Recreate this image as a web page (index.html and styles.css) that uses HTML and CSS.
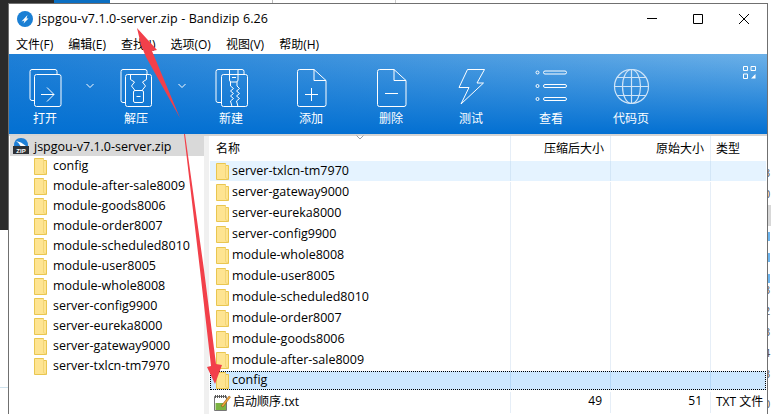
FILE: index.html
```html
<!DOCTYPE html>
<html lang="zh">
<head>
<meta charset="utf-8">
<title>Bandizip</title>
<link rel="stylesheet" href="styles.css">
</head>
<body>
<svg class="defs" width="0" height="0" aria-hidden="true">
  <symbol id="folder" viewBox="0 0 13 17">
    <path d="M.5.5H9.5L9.5 2.500H12.500V16.500H.5Z" fill="#fee491" stroke="#e9c650"/>
    <path d="M9.500 1V14.500L12 16" fill="none" stroke="#f3d677"/>
  </symbol>
</svg>
<div class="desktop" aria-hidden="true">
  <div class="bg-dark"></div>
  <div class="bg-blue"></div>
  <div class="bg-line1"></div>
  <div class="bg-line2"></div>
  <div class="bg-leftline"></div>
  <div class="bg-gray"></div>
  <div class="bg-b1"></div><div class="bg-b2"></div><div class="bg-b3"></div>
  <div class="frag f1">3</div><div class="frag f2">0</div><div class="frag f3">3</div><div class="frag f4">2</div><div class="frag f5">3</div><div class="frag f6">4</div><div class="frag f7">3</div><div class="frag f8">0</div>
</div>
<main class="window">
  <header class="titlebar">
    <svg class="appicon" width="16" height="16" viewBox="0 0 16 16"><circle cx="8" cy="8" r="8" fill="#1a7fd4"/><path d="M4.500 10.500 10.500 4 9.500 7.500 11.500 7.500 6.500 12.500 7.500 9.500Z" fill="#fff"/></svg>
    <span class="title">jspgou-v7.1.0-server.zip - Bandizip 6.26</span>
    <div class="winbtns">
      <svg width="10" height="10" viewBox="0 0 10 10"><path d="M0 4.500H10" stroke="#000" fill="none"/></svg>
      <svg width="10" height="10" viewBox="0 0 10 10"><path d="M.5.5H9.500V9.500H.5Z" stroke="#000" fill="none"/></svg>
      <svg width="10" height="10" viewBox="0 0 10 10"><path d="M0 0 10 10M10 0 0 10" stroke="#000" fill="none"/></svg>
    </div>
  </header>
  <nav class="menubar">
    <span>文件(F)</span><span>编辑(E)</span><span>查找(I)</span><span>选项(O)</span><span>视图(V)</span><span>帮助(H)</span>
  </nav>
  <section class="toolbar">
    <div class="tool w72">
      <svg class="ico" width="40" height="40" viewBox="0 0 40 40"><path d="M9 31.500H7Q5 31.500 5 29.500V2.500Q5 .5 7 .5H30Q32 .5 32 2.500V5"/><rect x="9.500" y="5.500" width="26.500" height="32" rx="2"/><path d="M16 25.500H29M22 18.500 29 25.500 22 32.500"/></svg>
      <span>打开</span>
    </div>
    <div class="chev"><svg width="8" height="6" viewBox="0 0 8 6"><path d="M.5 1 4 4.500 7.500 1"/></svg></div>
    <div class="tool w74">
      <svg class="ico" width="40" height="40" viewBox="0 0 40 40"><path d="M9 33.500H7Q5 33.500 5 31.500V2.500Q5 .5 7 .5H29Q31 .5 31 2.500V5"/><rect x="9.500" y="5.500" width="26" height="32" rx="2"/><path d="M14.500 5.500V10.500L18.500 13 15.500 17 19 21.500M30.500 5.500V10.500L26.500 13 29.500 17 26 21.500"/><rect x="17.500" y="21.500" width="10" height="12" rx="1.500"/><path d="M20.500 27.500H24.500"/></svg>
      <span>解压</span>
    </div>
    <div class="chev"><svg width="8" height="6" viewBox="0 0 8 6"><path d="M.5 1 4 4.500 7.500 1"/></svg></div>
    <div class="tool">
      <svg class="ico" width="40" height="40" viewBox="0 0 40 40"><path d="M10 33.500H7Q5 33.500 5 31.500V2.500Q5 .5 7 .5H31Q33 .5 33 2.500V5"/><rect x="10.500" y="5.500" width="26" height="32" rx="2"/><path d="M18.500 .5V11Q18.500 13 20.500 13H25Q27 13 27 11V.5M21 8.500H25M19.500 13V17L22.500 19.500 19.500 22 22.500 24.500 19.500 27 22.500 29.500 19.500 32 21 37.500M26 13V17L28.500 19.500 25.500 22 28.500 24.500 25.500 27 28.500 29.500 25.500 32 27 37.500"/></svg>
      <span>新建</span>
    </div>
    <div class="tool">
      <svg class="ico" width="40" height="40" viewBox="0 0 40 40"><path d="M6.500 2.500Q6.500 .5 8.500 .5H23L35 11.500V35.500Q35 37.500 33 37.500H8.500Q6.500 37.500 6.500 35.500ZM23 .5V11.500H35"/><path d="M14 25.500H27M20.500 19V32"/></svg>
      <span>添加</span>
    </div>
    <div class="tool">
      <svg class="ico" width="40" height="40" viewBox="0 0 40 40"><path d="M6.500 2.500Q6.500 .5 8.500 .5H23L35 11.500V35.500Q35 37.500 33 37.500H8.500Q6.500 37.500 6.500 35.500ZM23 .5V11.500H35"/><path d="M14 24.500H27"/></svg>
      <span>删除</span>
    </div>
    <div class="tool">
      <svg class="ico" width="40" height="40" viewBox="0 0 40 40"><path d="M16.500 .5H33.500L26 14H32.500L10 35 18 18.500H8Z"/></svg>
      <span>测试</span>
    </div>
    <div class="tool">
      <svg class="ico" width="40" height="40" viewBox="0 0 40 40"><circle cx="6.500" cy="3.500" r="1.500"/><circle cx="6.500" cy="17" r="1.500"/><circle cx="6.500" cy="30" r="1.500"/><rect x="12.500" y="2" width="23" height="3" rx="1.500"/><rect x="12.500" y="15.500" width="23" height="3" rx="1.500"/><rect x="12.500" y="28.500" width="23" height="3" rx="1.500"/></svg>
      <span>查看</span>
    </div>
    <div class="tool">
      <svg class="ico globe" width="40" height="40" viewBox="0 0 40 40"><circle cx="20.500" cy="17.500" r="17"/><ellipse cx="20.500" cy="17.500" rx="9" ry="17"/><path d="M20.500 .5V34.500M3.500 17.500H37.500M6 8.500H35M6 26.500H35"/></svg>
      <span>代码页</span>
    </div>
    <div class="gridbtn"><svg width="13" height="13" viewBox="0 0 13 13"><path d="M.5.5H4.500V4.500H.5ZM8 .5H12.500V4.500H8ZM.5 8H4.500V12.500H.5Z" fill="none" stroke="#fff"/><path d="M8 12.500 12.500 8V12.500Z" fill="#fff"/></svg></div>
  </section>
  <section class="content">
    <aside class="tree">
      <div class="tree-root">
        <svg width="16" height="16" viewBox="0 0 16 16"><path d="M1 8Q1 0 8 0T15 8Z" fill="#1e7fd6"/><rect x="0" y="8" width="16" height="8" fill="#2d3136"/><path d="M3 3 8 4.500 13 8H7.500L5.500 5Z" fill="#fff"/><text x="8" y="14.500" class="ziptxt">ZIP</text></svg>
        <span>jspgou-v7.1.0-server.zip</span>
      </div>
      <ul class="tree-list">
        <li><svg width="13" height="17"><use href="#folder"/></svg>config</li>
        <li><svg width="13" height="17"><use href="#folder"/></svg>module-after-sale8009</li>
        <li><svg width="13" height="17"><use href="#folder"/></svg>module-goods8006</li>
        <li><svg width="13" height="17"><use href="#folder"/></svg>module-order8007</li>
        <li><svg width="13" height="17"><use href="#folder"/></svg>module-scheduled8010</li>
        <li><svg width="13" height="17"><use href="#folder"/></svg>module-user8005</li>
        <li><svg width="13" height="17"><use href="#folder"/></svg>module-whole8008</li>
        <li><svg width="13" height="17"><use href="#folder"/></svg>server-config9900</li>
        <li><svg width="13" height="17"><use href="#folder"/></svg>server-eureka8000</li>
        <li><svg width="13" height="17"><use href="#folder"/></svg>server-gateway9000</li>
        <li><svg width="13" height="17"><use href="#folder"/></svg>server-txlcn-tm7970</li>
      </ul>
    </aside>
    <div class="splitter"></div>
    <section class="list">
      <div class="sortmark"><svg width="8" height="5" viewBox="0 0 8 5"><path d="M.5.5 4 4 7.500.5" fill="none" stroke="#9aa0a6"/></svg></div>
      <div class="row head"><span class="c-name">名称</span><span class="c-num">压缩后大小</span><span class="c-num">原始大小</span><span class="c-type">类型</span></div>
      <div class="row hover"><span class="c-name"><svg width="13" height="17"><use href="#folder"/></svg>server-txlcn-tm7970</span><span class="c-num"></span><span class="c-num"></span><span class="c-type"></span></div>
      <div class="row"><span class="c-name"><svg width="13" height="17"><use href="#folder"/></svg>server-gateway9000</span><span class="c-num"></span><span class="c-num"></span><span class="c-type"></span></div>
      <div class="row"><span class="c-name"><svg width="13" height="17"><use href="#folder"/></svg>server-eureka8000</span><span class="c-num"></span><span class="c-num"></span><span class="c-type"></span></div>
      <div class="row"><span class="c-name"><svg width="13" height="17"><use href="#folder"/></svg>server-config9900</span><span class="c-num"></span><span class="c-num"></span><span class="c-type"></span></div>
      <div class="row"><span class="c-name"><svg width="13" height="17"><use href="#folder"/></svg>module-whole8008</span><span class="c-num"></span><span class="c-num"></span><span class="c-type"></span></div>
      <div class="row"><span class="c-name"><svg width="13" height="17"><use href="#folder"/></svg>module-user8005</span><span class="c-num"></span><span class="c-num"></span><span class="c-type"></span></div>
      <div class="row"><span class="c-name"><svg width="13" height="17"><use href="#folder"/></svg>module-scheduled8010</span><span class="c-num"></span><span class="c-num"></span><span class="c-type"></span></div>
      <div class="row"><span class="c-name"><svg width="13" height="17"><use href="#folder"/></svg>module-order8007</span><span class="c-num"></span><span class="c-num"></span><span class="c-type"></span></div>
      <div class="row"><span class="c-name"><svg width="13" height="17"><use href="#folder"/></svg>module-goods8006</span><span class="c-num"></span><span class="c-num"></span><span class="c-type"></span></div>
      <div class="row"><span class="c-name"><svg width="13" height="17"><use href="#folder"/></svg>module-after-sale8009</span><span class="c-num"></span><span class="c-num"></span><span class="c-type"></span></div>
      <div class="row selected"><span class="c-name"><svg width="13" height="17"><use href="#folder"/></svg>config</span><span class="c-num"></span><span class="c-num"></span><span class="c-type"></span></div>
      <div class="row data"><span class="c-name"><svg class="txticon" width="17" height="17" viewBox="0 0 17 17"><path d="M.5 2.500H12.500V16.500H.5Z" fill="#fff" stroke="#777"/><path d="M1.500 9H12V16H1.500Z" fill="#7cb342"/><path d="M1.500 1V4M3.500 1V4M5.500 1V4M7.500 1V4M9.500 1V4M11.500 1V4" stroke="#555"/><path d="M7 12 15 2 16.500 3 9 13Z" fill="#f4a63a" stroke="#7a4a12" stroke-width=".5"/></svg>启动顺序.txt</span><span class="c-num">49</span><span class="c-num">51</span><span class="c-type">TXT 文件</span></div>
    </section>
  </section>
</main>
<svg class="arrows" width="771" height="414" viewBox="0 0 771 414" aria-hidden="true">
  <path d="M137 28 157 50 152 51 180 118 146 57 141 45Z" fill="#f2404a"/>
  <path d="M184 134 185 134 204 270 216 364 222 365 215 384 207 367 211 366 200 270Z" fill="#f2404a"/>
</svg>
</body>
</html>
```
FILE: styles.css
```css
* { box-sizing: border-box; }
html, body { margin: 0; height: 100%; }
body {
  position: relative;
  width: 771px;
  height: 414px;
  overflow: hidden;
  background: #fff;
  padding: 3px 0 0 8px;
  font-family: "Open Sans", "Noto Sans CJK SC", sans-serif;
  font-size: 12.5px;
  color: #000;
}
.defs { position: absolute; }
.desktop { position: absolute; inset: 0; }
.bg-dark { position: absolute; left: 0; top: 0; width: 8px; height: 230px; background: #2b2b2b; }
.bg-dark::after { content: ""; position: absolute; left: 8px; top: 0; width: 46px; height: 3px; background: #2b2b2b; }
.bg-blue { position: absolute; left: 54px; top: 0; width: 56px; height: 3px; background: #0b6fc2; }
.bg-line1 { position: absolute; left: 272px; top: 0; width: 1px; height: 3px; background: #bbb; }
.bg-line2 { position: absolute; left: 395px; top: 0; width: 1px; height: 3px; background: #ccc; }
.bg-leftline { position: absolute; left: 0; top: 387px; width: 8px; height: 1px; background: #cfe3ee; }
.bg-gray { position: absolute; left: 768px; top: 205px; width: 3px; height: 21px; background: #d8d8d8; }
.bg-b1, .bg-b2, .bg-b3 { position: absolute; left: 768px; width: 2px; background: #6db5ee; }
.bg-b1 { top: 232px; height: 9px; }
.bg-b2 { top: 253px; height: 9px; }
.bg-b3 { top: 274px; height: 9px; }
.frag { position: absolute; left: 764px; width: 7px; font-size: 11px; line-height: 14px; color: #555; }
.f1 { top: 166px; } .f2 { top: 187px; } .f3 { top: 283px; } .f4 { top: 304px; }
.f5 { top: 325px; } .f6 { top: 346px; } .f7 { top: 367px; } .f8 { top: 397px; }

.window {
  position: relative;
  width: 760px;
  height: 411px;
  background: #fff;
  border: 1px solid #707070;
  border-bottom: 0;
  display: flex;
  flex-direction: column;
}
.titlebar { height: 29px; display: flex; align-items: center; padding-left: 8px; flex: none; }
.appicon { margin-right: 5px; }
.title { font-size: 12.5px; letter-spacing: .1px; }
.winbtns { margin-left: auto; display: flex; gap: 36px; padding-right: 18px; }
.menubar { height: 21px; display: flex; align-items: center; padding-left: 7px; flex: none; gap: 15px; font-size: 12px; }
.toolbar {
  height: 80px;
  flex: none;
  display: flex;
  position: relative;
  background: linear-gradient(to bottom, rgba(3,112,210,0) 0%, #0370d2 100%), linear-gradient(to right, #1f7fd6, #6db1e8);
  color: #fff;
}
.tool { width: 80px; flex: none; display: flex; flex-direction: column; align-items: center; padding-top: 15px; gap: 2px; font-size: 12px; line-height: 16px; }
.w72 { width: 72px; }
.w74 { width: 74px; }
.ico { fill: none; stroke: #fff; stroke-width: 1; }
.globe { stroke: #cfe4f7; stroke-width: 1.2; }
.chev { width: 18px; flex: none; display: flex; justify-content: center; padding-top: 29px; }
.chev svg { fill: none; stroke: #fff; }
.gridbtn { position: absolute; right: 11px; top: 12px; line-height: 0; }
.content { flex: 1; display: flex; min-height: 0; border-top: 2px solid #d4d4d4; }
.tree { width: 195px; flex: none; padding-left: 1px; }
.tree-root { height: 20px; background: #d9d9d9; display: flex; align-items: center; gap: 5px; padding-left: 3px; }
.ziptxt { font: bold 6px "Liberation Sans", sans-serif; fill: #fff; text-anchor: middle; }
.tree-list { list-style: none; margin: 0; padding: 0; }
.tree-list li { height: 20px; display: flex; align-items: center; padding: 0 0 2px 24px; gap: 6px; }
.tree-list svg { margin-top: 2px; }
.splitter { width: 5px; flex: none; background: #f0f0f0; }
.list { flex: 1; position: relative; padding-left: 1px; }
.sortmark { position: absolute; left: 147px; top: -1px; line-height: 0; }
.row { display: flex; width: 556px; height: 21px; align-items: stretch; }
.row > span { display: flex; align-items: center; border-left: 1px solid #e6eef7; flex: none; }
.row .c-name { padding-bottom: 2px; }
.row .c-name svg { margin-top: 2px; }
.row.head { height: 25px; font-size: 12px; }
.row.head > span { padding-bottom: 2px; }
.c-name { width: 300px; border-left: 0 !important; padding-left: 6px; gap: 3px; }
.c-num { width: 100px; justify-content: flex-end; padding-right: 6px; }
.data .c-num { padding-right: 8px; }
.c-type { width: 56px; padding-left: 5px; white-space: nowrap; overflow: hidden; }
.data > span { font-size: 12px; }
.data > .c-name { padding-bottom: 4px; }
.data > .c-name svg { margin-top: 4px; }
.data > .c-num, .data > .c-type { padding-bottom: 4px; }
.txticon { margin: 0 -1px 0 -2px; }
.hover { height: 20px; margin-bottom: 1px; background: #e5f3ff; }
.hover > span { border-left-color: #d3e6f7; }
.selected { height: 19px; margin-bottom: 2px; background: #cde8ff; outline: 1px dotted #000; outline-offset: -1px; }
.selected > span { border-left-color: #b5d8f7; }
.arrows { position: absolute; left: 0; top: 0; pointer-events: none; }
```
